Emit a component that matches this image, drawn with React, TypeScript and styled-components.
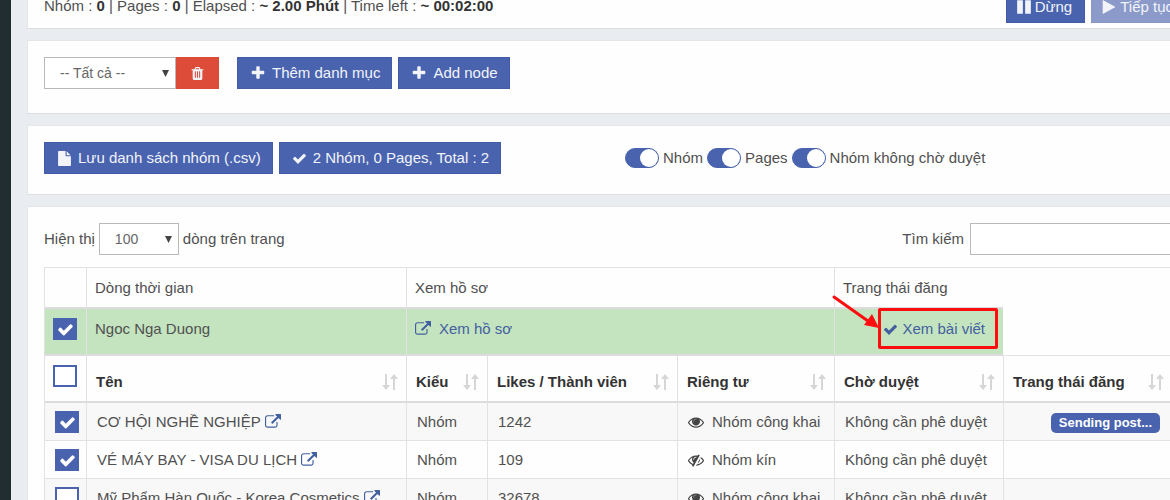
import React from "react";
import styled, { createGlobalStyle, css } from "styled-components";

const blue = "#4963af";
const line = "#e2e2e2";
const heavyLine = "#dcdcdc";

const GlobalStyle = createGlobalStyle`
  *, *::before, *::after { box-sizing: border-box; }
  body {
    margin: 0;
    background: #e9edf2;
    color: #505050;
    font-family: "Liberation Sans", Arial, sans-serif;
    font-size: 15px;
    line-height: 22px;
  }
  button, select, input { font: inherit; }
`;

const Shell = styled.div`
  display: flex;
  height: 100vh;
  overflow: hidden;
`;

const Sidebar = styled.aside`
  flex: 0 0 11px;
  background: #222d32;
`;

const Main = styled.main`
  flex: 1;
  display: flex;
  flex-direction: column;
  gap: 11px;
  margin: -26px -33px 0 16px;
`;

const Card = styled.section<{ $bottom: number }>`
  flex: none;
  padding: 16px 16px ${(p) => p.$bottom}px;
  background: #fefefe;
  border: 1px solid #e4e6e8;
  border-bottom-color: #dcdee0;
`;

const Bar = styled.div<{ $between?: boolean }>`
  display: flex;
  align-items: center;
  justify-content: ${(p) => (p.$between ? "space-between" : "flex-start")};
  gap: 6px;
`;

const SplitBar = styled.div`
  display: grid;
  grid-template-columns: 29fr 28fr;
  align-items: center;
`;

const Status = styled.p`
  margin: 0;
  line-height: 20px;
  padding-bottom: 2px;
  b { color: #333; }
`;

const Button = styled.button`
  display: inline-flex;
  align-items: center;
  gap: 6px;
  height: 32px;
  padding: 0 11px 0 12px;
  border: 1px solid #435ca8;
  background: ${blue};
  color: #f2f4fa;
  white-space: nowrap;
  &:disabled {
    background: #8c9aca;
    border-color: #8996c6;
  }
`;

const MediaButton = styled(Button)`
  gap: 3px;
  padding: 0 12px 0 9px;
`;

const DeleteButton = styled(Button)`
  padding: 0 13px;
  border-color: #d94a38;
  background: #dd4b39;
`;

const FilterGroup = styled.div`
  display: flex;
  margin-right: 12px;
`;

const SelectBox = styled.span<{ $width: number }>`
  display: inline-grid;
  width: ${(p) => p.$width}px;
  align-items: center;
  > * { grid-area: 1 / 1; }
  svg { justify-self: end; margin-right: 7px; pointer-events: none; }
  select {
    appearance: none;
    width: 100%;
    height: 32px;
    padding: 0 15px;
    border: 1px solid #b9b9b9;
    border-radius: 0;
    background: #fff;
    color: #666;
    font-size: 14px;
  }
`;

const Toggles = styled.div`
  display: flex;
  gap: 4px;
`;

const ToggleLabel = styled.label`
  display: flex;
  align-items: center;
  gap: 4px;
  white-space: nowrap;
`;

const ToggleInput = styled.input`
  appearance: none;
  display: flex;
  justify-content: flex-end;
  width: 34px;
  height: 20px;
  margin: 0;
  border: 1px solid ${blue};
  border-radius: 10px;
  background: ${blue};
  &::before {
    content: "";
    width: 18px;
    height: 18px;
    border-radius: 50%;
    background: #fff;
  }
  &:not(:checked) { justify-content: flex-start; background: #ccc; }
`;

const Inline = styled.label`
  display: flex;
  align-items: center;
  gap: 4px;
`;

const SearchInput = styled.input`
  width: 216px;
  height: 32px;
  margin-left: 2px;
  padding: 0 8px;
  border: 1px solid #b9b9b9;
  background: #fff;
`;

const Table = styled.table`
  table-layout: fixed;
  width: calc(100% - 14px);
  margin-top: 12px;
  border-collapse: separate;
  border-spacing: 0;
  border-top: 1px solid ${line};
  th, td {
    text-align: left;
    white-space: nowrap;
    border-left: 1px solid ${line};
  }
`;

const TitleRow = styled.tr`
  th {
    height: 41px;
    padding: 0 8px;
    font-weight: normal;
    border-bottom: 2px solid ${heavyLine};
  }
`;

const ProfileRow = styled.tr`
  td {
    height: 47px;
    padding: 9px 8px 14px;
    vertical-align: top;
    background: #c4e4bf;
    border-bottom: 2px solid ${heavyLine};
  }
`;

const Blank = styled.td`
  && {
    background: none;
    border-left: 0;
    border-bottom: 0;
  }
  ${ProfileRow} && { border-bottom: 1px solid ${line}; }
`;

const HeadRow = styled.tr`
  th {
    height: 47px;
    padding: 9px 8px 8px 9px;
    vertical-align: bottom;
    color: #333;
    border-bottom: 2px solid ${heavyLine};
  }
  th:first-child { padding-left: 8px; vertical-align: top; }
`;

const HeadCell = styled.div`
  display: flex;
  justify-content: space-between;
  align-items: center;
`;

const DataRow = styled.tr`
  &:nth-child(odd) td { background: #f8f8f8; }
  td {
    height: 38px;
    padding: 8px 10px 7px;
    vertical-align: top;
    border-bottom: 1px solid ${line};
  }
`;

const WithIcon = styled.span<{ $gap: number }>`
  display: flex;
  align-items: center;
  gap: ${(p) => p.$gap}px;
`;

const Link = styled.a<{ $gap?: number }>`
  display: inline-flex;
  align-items: center;
  vertical-align: top;
  gap: ${(p) => p.$gap ?? 0}px;
  color: #435f9f;
  text-decoration: none;
`;

const RightCell = styled.td<{ $pad: number }>`
  && { text-align: right; padding-right: ${(p) => p.$pad}px; }
`;

const Highlight = styled.span`
  position: relative;
  display: inline-flex;
  vertical-align: top;
`;

const RedBox = styled.span`
  position: absolute;
  inset: -10px -13px -9px -5px;
  border: 3px solid #fb0d10;
  border-radius: 2px;
  pointer-events: none;
`;

const RedArrow = styled.svg`
  position: absolute;
  left: -51px;
  top: -24px;
  width: 48px;
  height: 36px;
  pointer-events: none;
`;

const Badge = styled.span`
  display: inline-block;
  height: 20px;
  margin-top: 2px;
  padding: 0 8px;
  border-radius: 5px;
  background: ${blue};
  color: #fff;
  font-size: 13px;
  font-weight: bold;
  line-height: 20px;
  vertical-align: top;
`;

const CheckBoxWrap = styled.span`
  display: grid;
  width: 24px;
  height: 22px;
  place-items: center;
  > * { grid-area: 1 / 1; }
  svg { color: #fff; pointer-events: none; visibility: hidden; }
  input:checked + svg { visibility: visible; }
`;

const CheckInput = styled.input`
  appearance: none;
  width: 24px;
  height: 22px;
  margin: 0;
  border: 2px solid ${blue};
  background: #fff;
  &:checked { background: ${blue}; }
`;

const IconSvg = styled.svg<{ $dark?: boolean }>`
  flex: none;
  fill: currentColor;
  ${(p) => p.$dark && css`color: #444;`}
`;

const paths = {
  check:
    "M1671 566q0 40-28 68l-724 724-136 136q-28 28-68 28t-68-28l-136-136-362-362q-28-28-28-68t28-68l136-136q28-28 68-28t68 28l294 295 656-657q28-28 68-28t68 28l136 136q28 28 28 68z",
  plus:
    "M1600 736v192q0 40-28 68t-68 28h-416v416q0 40-28 68t-68 28h-192q-40 0-68-28t-28-68v-416h-416q-40 0-68-28t-28-68v-192q0-40 28-68t68-28h416v-416q0-40 28-68t68-28h192q40 0 68 28t28 68v416h416q40 0 68 28t28 68z",
  pause:
    "M1664 192v1408q0 26-19 45t-45 19h-512q-26 0-45-19t-19-45v-1408q0-26 19-45t45-19h512q26 0 45 19t19 45zm-896 0v1408q0 26-19 45t-45 19h-512q-26 0-45-19t-19-45v-1408q0-26 19-45t45-19h512q26 0 45 19t19 45z",
  play:
    "M1576 927l-1328 738q-23 13-39.5 3t-16.5-36v-1472q0-26 16.5-36t39.5 3l1328 738q23 13 23 31t-23 31z",
  file:
    "M1152 512v-472q22 14 36 28l408 408q14 14 28 36h-472zm-128 32q0 40 28 68t68 28h544v1056q0 40-28 68t-68 28h-1344q-40 0-68-28t-28-68v-1600q0-40 28-68t68-28h800v544z",
  trash:
    "M704 1376v-704q0-14-9-23t-23-9h-64q-14 0-23 9t-9 23v704q0 14 9 23t23 9h64q14 0 23-9t9-23zm256 0v-704q0-14-9-23t-23-9h-64q-14 0-23 9t-9 23v704q0 14 9 23t23 9h64q14 0 23-9t9-23zm256 0v-704q0-14-9-23t-23-9h-64q-14 0-23 9t-9 23v704q0 14 9 23t23 9h64q14 0 23-9t9-23zm-544-992h448l-48-117q-7-9-17-11h-317q-10 2-17 11zm928 32v64q0 14-9 23t-23 9h-96v948q0 83-47 143.5t-113 60.5h-832q-66 0-113-58.5t-47-141.5v-952h-96q-14 0-23-9t-9-23v-64q0-14 9-23t23-9h309l70-167q15-37 54-63t79-26h320q40 0 79 26t54 63l70 167h309q14 0 23 9t9 23z",
  external:
    "M1408 928v320q0 119-84.5 203.5t-203.5 84.5h-832q-119 0-203.5-84.5t-84.5-203.5v-832q0-119 84.5-203.5t203.5-84.5h704q14 0 23 9t9 23v64q0 14-9 23t-23 9h-704q-66 0-113 47t-47 113v832q0 66 47 113t113 47h832q66 0 113-47t47-113v-320q0-14 9-23t23-9h64q14 0 23 9t9 23zm384-864v512q0 26-19 45t-45 19-45-19l-176-176-652 652q-10 10-23 10t-23-10l-114-114q-10-10-10-23t10-23l652-652-176-176q-19-19-19-45t19-45 45-19h512q26 0 45 19t19 45z",
  eye:
    "M1664 960q-152-236-381-353 61 104 61 225 0 185-131.5 316.5t-316.5 131.5-316.500-131.500-131.500-316.500q0-121 61-225-229 117-381 353 133 205 333.500 326.500t434.500 121.500 434.500-121.500 333.500-326.500zm-720-384q0-20-14-34t-34-14q-125 0-214.500 89.500t-89.500 214.500q0 20 14 34t34 14 34-14 14-34q0-86 61-147t147-61q20 0 34-14t14-34zm848 384q0 34-20 69-140 230-376.500 368.500t-499.500 138.500-499.500-139-376.500-368q-20-35-20-69t20-69q140-229 376.500-368t499.500-139 499.500 139 376.500 368q20 35 20 69z",
  eyeSlash:
    "M555 1335l78-141q-87-63-136-159t-49-203q0-121 61-225-229 117-381 353 167 258 427 375zm389-759q0-20-14-34t-34-14q-125 0-214.500 89.500t-89.500 214.500q0 20 14 34t34 14 34-14 14-34q0-86 61-147t147-61q20 0 34-14t14-34zm363-191q0 7-1 9-106 189-316 567t-315 566l-49 89q-10 16-28 16-12 0-134-70-16-10-16-28 0-12 44-87-143-65-263.500-173t-208.500-245q-20-31-20-69t20-69q153-235 380-371t496-136q89 0 180 17l54-97q10-16 28-16 5 0 18 6t31 15.500 33 18.500 31.500 18.500 19.500 11.500q16 10 16 27zm37 447q0 139-79 253.500t-209 164.500l280-502q8 45 8 84zm448 128q0 35-20 69-39 64-109 145-150 172-347.500 267t-419.500 95l74-132q212-18 392.500-137t301.500-307q-115-179-282-294l63-112q95 64 182.500 153t144.500 182q20 34 20 69z",
};

function Icon({ name, size = 16, dark }: { name: keyof typeof paths; size?: number; dark?: boolean }) {
  return (
    <IconSvg $dark={dark} width={size} height={size} viewBox="0 0 1792 1792" aria-hidden="true">
      {name === "eye" && <circle cx="896" cy="832" r="380" opacity="0.6" />}
      <path d={paths[name]} />
    </IconSvg>
  );
}

function SortIcon() {
  return (
    <svg width="16" height="16" viewBox="0 0 16 16" fill="#d6d6d6" aria-hidden="true">
      <path d="M3 0h2v11h3L4 16 0 11h3zM11 16h2V5h3l-4-5-4 5h3z" />
    </svg>
  );
}

function Caret() {
  return (
    <svg width="7" height="7" viewBox="0 0 7 7" fill="#444" aria-hidden="true">
      <path d="M0 0h7L3.5 7z" />
    </svg>
  );
}

function CheckBox({ checked, label }: { checked?: boolean; label: string }) {
  return (
    <CheckBoxWrap>
      <CheckInput type="checkbox" defaultChecked={checked} aria-label={label} />
      <Icon name="check" size={17} />
    </CheckBoxWrap>
  );
}

function Toggle({ children }: { children: string }) {
  return (
    <ToggleLabel>
      <ToggleInput type="checkbox" role="switch" defaultChecked />
      {children}
    </ToggleLabel>
  );
}

const columns = ["Tên", "Kiểu", "Likes / Thành viên", "Riêng tư", "Chờ duyệt", "Trang thái đăng"];

const groups = [
  { name: "CƠ HỘI NGHỀ NGHIỆP", members: "1242", open: true, checked: true, status: "Sending post..." },
  { name: "VÉ MÁY BAY - VISA DU LỊCH", members: "109", open: false, checked: true, status: "" },
  { name: "Mỹ Phẩm Hàn Quốc - Korea Cosmetics", members: "32678", open: true, checked: false, status: "" },
];

export default function App() {
  return (
    <Shell>
      <GlobalStyle />
      <Sidebar />
      <Main>
        <Card $bottom={5}>
          <Bar $between>
            <Status>
              Nhóm : <b>0</b> | Pages : <b>0</b> | Elapsed : <b>~ 2.00 Phút</b> | Time left : <b>~ 00:02:00</b>
            </Status>
            <Bar>
              <MediaButton type="button"><Icon name="pause" />Dừng</MediaButton>
              <MediaButton type="button" disabled><Icon name="play" />Tiếp tục</MediaButton>
            </Bar>
          </Bar>
        </Card>

        <Card $bottom={24}>
          <Bar>
            <FilterGroup>
              <SelectBox $width={132}>
                <select aria-label="Danh mục"><option>-- Tất cả --</option></select>
                <Caret />
              </SelectBox>
              <DeleteButton type="button" aria-label="Xóa"><Icon name="trash" size={15} /></DeleteButton>
            </FilterGroup>
            <Button type="button"><Icon name="plus" />Thêm danh mục</Button>
            <Button type="button"><Icon name="plus" />Add node</Button>
          </Bar>
        </Card>

        <Card $bottom={20}>
          <SplitBar>
            <Bar>
              <Button type="button"><Icon name="file" size={15} />Lưu danh sách nhóm (.csv)</Button>
              <Button type="button"><Icon name="check" size={15} />2 Nhóm, 0 Pages, Total : 2</Button>
            </Bar>
            <Toggles>
              <Toggle>Nhóm</Toggle>
              <Toggle>Pages</Toggle>
              <Toggle>Nhóm không chờ duyệt</Toggle>
            </Toggles>
          </SplitBar>
        </Card>

        <Card $bottom={16}>
          <Bar $between>
            <Inline>
              Hiện thị
              <SelectBox $width={80}>
                <select><option>100</option></select>
                <Caret />
              </SelectBox>
              dòng trên trang
            </Inline>
            <Inline>
              Tìm kiếm
              <SearchInput type="search" />
            </Inline>
          </Bar>

          <Table>
            <colgroup>
              <col width="42" />
              <col width="320" />
              <col width="81" />
              <col width="190" />
              <col width="157" />
              <col width="169" />
              <col />
            </colgroup>
            <thead>
              <TitleRow>
                <th />
                <th>Dòng thời gian</th>
                <th colSpan={3}>Xem hồ sơ</th>
                <th>Trang thái đăng</th>
                <Blank />
              </TitleRow>
              <ProfileRow>
                <td><CheckBox checked label="Ngoc Nga Duong" /></td>
                <td>Ngoc Nga Duong</td>
                <td colSpan={3}>
                  <Link href="#profile" $gap={8}><Icon name="external" />Xem hồ sơ</Link>
                </td>
                <RightCell $pad={18}>
                  <Highlight>
                    <Link href="#post" $gap={4}><Icon name="check" size={15} />Xem bài viết</Link>
                    <RedBox />
                    <RedArrow viewBox="0 0 48 36">
                      <path d="M2 3L36 27" stroke="#fb0d10" strokeWidth="3" strokeLinecap="round" />
                      <path d="M47 34L32 31L40 20z" fill="#fb0d10" />
                    </RedArrow>
                  </Highlight>
                </RightCell>
                <Blank />
              </ProfileRow>
              <HeadRow>
                <th><CheckBox label="Chọn tất cả" /></th>
                {columns.map((name) => (
                  <th key={name}>
                    <HeadCell>{name}<SortIcon /></HeadCell>
                  </th>
                ))}
              </HeadRow>
            </thead>
            <tbody>
              {groups.map((g) => (
                <DataRow key={g.name}>
                  <td><CheckBox checked={g.checked} label={g.name} /></td>
                  <td>
                    <WithIcon $gap={4}>
                      {g.name}
                      <Link href="#group" aria-label={g.name}><Icon name="external" /></Link>
                    </WithIcon>
                  </td>
                  <td>Nhóm</td>
                  <td>{g.members}</td>
                  <td>
                    <WithIcon $gap={8}>
                      <Icon dark name={g.open ? "eye" : "eyeSlash"} />
                      {g.open ? "Nhóm công khai" : "Nhóm kín"}
                    </WithIcon>
                  </td>
                  <td>Không cần phê duyệt</td>
                  <RightCell $pad={12}>{g.status && <Badge>{g.status}</Badge>}</RightCell>
                </DataRow>
              ))}
            </tbody>
          </Table>
        </Card>
      </Main>
    </Shell>
  );
}
